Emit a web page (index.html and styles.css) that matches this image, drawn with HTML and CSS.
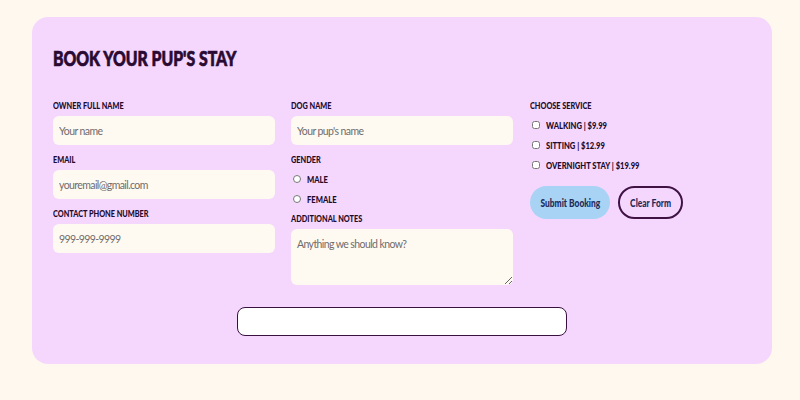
FILE: index.html
```html
<!DOCTYPE html>
<html>
<head>
<meta charset="utf-8">
<link rel="stylesheet" href="styles.css">
</head>
<body>
<div class="card">
  <h1 class="title">BOOK YOUR PUP'S STAY</h1>
  <form class="grid">
    <div class="col">
      <label class="lbl">OWNER FULL NAME</label>
      <input class="field" type="text" placeholder="Your name">
      <label class="lbl">EMAIL</label>
      <input class="field" type="text" placeholder="youremail@gmail.com">
      <label class="lbl">CONTACT PHONE NUMBER</label>
      <input class="field" type="text" placeholder="999-999-9999">
    </div>
    <div class="col">
      <label class="lbl">DOG NAME</label>
      <input class="field" type="text" placeholder="Your pup's name">
      <label class="lbl">GENDER</label>
      <div class="opts">
        <label class="opt"><input type="radio" name="g" class="radio"><span class="txt">MALE</span></label>
        <label class="opt"><input type="radio" name="g" class="radio"><span class="txt">FEMALE</span></label>
      </div>
      <label class="lbl">ADDITIONAL NOTES</label>
      <textarea class="field notes" placeholder="Anything we should know?"></textarea>
    </div>
    <div class="col">
      <label class="lbl">CHOOSE SERVICE</label>
      <div class="opts checks">
        <label class="opt"><input type="checkbox" class="check"><span class="txt">WALKING | $9.99</span></label>
        <label class="opt"><input type="checkbox" class="check"><span class="txt">SITTING | $12.99</span></label>
        <label class="opt"><input type="checkbox" class="check"><span class="txt">OVERNIGHT STAY | $19.99</span></label>
      </div>
      <div class="btns">
        <button type="button" class="btn submit"><span class="btxt">Submit Booking</span></button>
        <button type="button" class="btn clear"><span class="btxt">Clear Form</span></button>
      </div>
    </div>
  </form>
  <div class="result"></div>
</div>
</body>
</html>
```

FILE: styles.css
```css
* { box-sizing: border-box; }
html, body { margin: 0; padding: 0; }
body {
  background: #fff8ee;
  font-family: "Lato", "Liberation Sans", sans-serif;
  color: #2a0c33;
  padding: 17px 28px 0 32px;
}
.card {
  width: 740px;
  height: 347px;
  background: #f5d7fe;
  border-radius: 16px;
  padding: 27px 21px 0 21px;
  display: flex;
  flex-direction: column;
}
.title {
  margin: 0;
  font-family: "Lato", sans-serif;
  font-weight: 900;
  font-size: 20px;
  line-height: 28px;
  color: #2a0a32;
  -webkit-text-stroke: 0.7px #2a0a32;
  transform: scaleX(0.79);
  transform-origin: left center;
  white-space: nowrap;
}
.grid {
  margin: 0;
  margin-top: 28px;
  display: grid;
  grid-template-columns: 222px 223px 222px;
  column-gap: 16px;
}
.col {
  display: flex;
  flex-direction: column;
}
.lbl {
  font-weight: 900;
  font-size: 9.5px;
  line-height: 12px;
  color: #220a2b;
  margin-bottom: 4px;
  white-space: nowrap;
  transform: scaleX(0.77);
  transform-origin: left center;
}
.field {
  width: 222px;
  height: 29px;
  border: none;
  border-radius: 6px;
  background: #fffaf1;
  padding: 0 6px;
  font-family: "Lato", sans-serif;
  font-size: 10.5px;
  letter-spacing: -0.6px;
  color: #333;
  margin-bottom: 9px;
  outline: none;
}
.field::placeholder { color: #706b6b; }
.notes {
  height: 56px;
  padding: 9px 6px;
  resize: vertical;
  margin-bottom: 0;
}
.opts {
  display: flex;
  flex-direction: column;
  gap: 8px;
  margin: 3px 0 8px 0;
}
.opt {
  display: flex;
  align-items: center;
  height: 12px;
}
.txt {
  display: inline-block;
  font-weight: 900;
  font-size: 9.5px;
  color: #220a2b;
  white-space: nowrap;
  transform: scaleX(0.8);
  transform-origin: left center;
}
.radio, .check {
  margin: 0 6px 0 2px;
  width: 8px;
  height: 8px;
}
.checks { margin-top: 3px; }
.btns {
  display: flex;
  gap: 8px;
  margin-top: 7px;
}
.btn {
  height: 33px;
  border-radius: 17px;
  font-family: "Lato", sans-serif;
  font-weight: 900;
  font-size: 10.5px;
  color: #1c2a5a;
  cursor: pointer;
  padding: 0;
  display: flex;
  align-items: center;
  justify-content: center;
}
.btxt {
  display: inline-block;
  white-space: nowrap;
  transform: scaleX(0.8);
}
.submit {
  width: 80px;
  background: #a9d3f4;
  border: none;
}
.clear {
  width: 65px;
  background: transparent;
  border: 2px solid #3f1244;
}
.result {
  align-self: center;
  width: 330px;
  height: 29px;
  margin-top: 22px;
  background: #ffffff;
  border: 1px solid #3a1040;
  border-radius: 8px;
}
```
